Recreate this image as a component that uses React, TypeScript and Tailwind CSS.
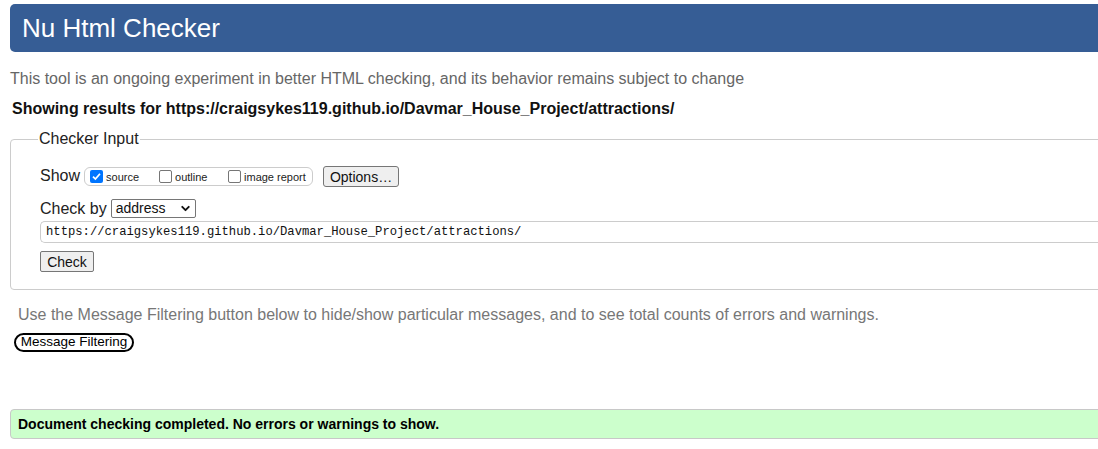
import { ChevronDown } from 'lucide-react';

const sans = { fontFamily: '"Liberation Sans", Arial, sans-serif' };

function Box({ checked, label }: { checked?: boolean; label: string }) {
  return (
    <label className="flex items-center gap-[3px] text-[11px] text-[#222]">
      {checked ? (
        <span className="w-[13px] h-[13px] rounded-[2px] bg-[#0075ff] flex items-center justify-center">
          <svg viewBox="0 0 12 12" className="w-[11px] h-[11px]">
            <path d="M2.2 6.2 L4.8 8.8 L9.8 3" fill="none" stroke="#fff" strokeWidth="1.9" />
          </svg>
        </span>
      ) : (
        <span className="w-[13px] h-[13px] rounded-[2px] border border-[#767676] bg-white" />
      )}
      <span className="pt-[3px]">{label}</span>
    </label>
  );
}

export default function App() {
  return (
    <div className="w-full h-[449px] overflow-hidden bg-white" style={sans}>
      <div className="w-[1120px] pl-[10px] pt-[4px]">
        <h1 className="h-[48px] rounded-[5px] bg-[#365d95] text-white text-[26px] pl-[12px] flex items-center">
          Nu Html Checker
        </h1>

        <p className="mt-[17px] text-[16px] leading-[20px] text-[#666]">
          This tool is an ongoing experiment in better HTML checking, and its behavior remains subject to change
        </p>
        <p className="mt-[10px] ml-[2px] text-[16px] leading-[20px] font-bold text-[#111]">
          Showing results for https://craigsykes119.github.io/Davmar_House_Project/attractions/
        </p>

        {/* checker input */}
        <fieldset className="mt-[8px] border border-[#ccc] rounded-l-[4px] pl-[29px] pb-[17px] h-[163px]">
          <legend className="ml-[-2px] px-[1px] text-[16px] text-[#222]">Checker Input</legend>

          <div className="flex items-center mt-[15px] h-[20px]">
            <span className="text-[16px] text-[#222]">Show</span>
            <div className="ml-[4px] h-[19px] w-[229px] border border-[#ccc] rounded-[6px] flex items-center pl-[5px] gap-0">
              <div className="w-[69px]"><Box checked label="source" /></div>
              <div className="w-[69px]"><Box label="outline" /></div>
              <Box label="image report" />
            </div>
            <button className="ml-[10px] h-[21px] w-[76px] border border-[#767676] rounded-[3px] bg-[#efefef] text-[14px] text-[#111]">
              Options…
            </button>
          </div>

          <div className="flex items-center mt-[13px] h-[19px]">
            <span className="text-[16px] text-[#222]">Check by</span>
            <div className="ml-[4px] h-[19px] w-[85px] border border-[#767676] rounded-[2px] flex items-center justify-between pl-[4px] pr-[3px] text-[14px] text-[#111]">
              address
              <ChevronDown className="w-[13px] h-[13px]" strokeWidth={3.5} />
            </div>
          </div>

          <div
            className="mt-[3px] h-[22px] border-y border-l border-[#ccc] rounded-l-[5px] flex items-center pl-[5px] text-[12.2px] text-[#111]"
            style={{ fontFamily: '"Liberation Mono", monospace' }}
          >
            https://craigsykes119.github.io/Davmar_House_Project/attractions/
          </div>

          <button className="mt-[8px] h-[21px] w-[54px] border border-[#767676] rounded-[2px] bg-[#efefef] text-[14px] text-[#111]">
            Check
          </button>
        </fieldset>

        <p className="mt-[15px] ml-[8px] text-[16px] leading-[20px] text-[#777]">
          Use the Message Filtering button below to hide/show particular messages, and to see total counts of errors and warnings.
        </p>
        <button className="mt-[8px] ml-[4px] h-[19px] w-[120px] border-2 border-black rounded-full text-[13.5px] text-black flex items-center justify-center">
          Message Filtering
        </button>

        <div className="mt-[57px] h-[30px] border border-[#c8c8c8] rounded-l-[4px] bg-[#ccffcc] flex items-center pl-[7px] text-[14px] font-bold text-black">
          Document checking completed. No errors or warnings to show.
        </div>
      </div>
    </div>
  );
}
